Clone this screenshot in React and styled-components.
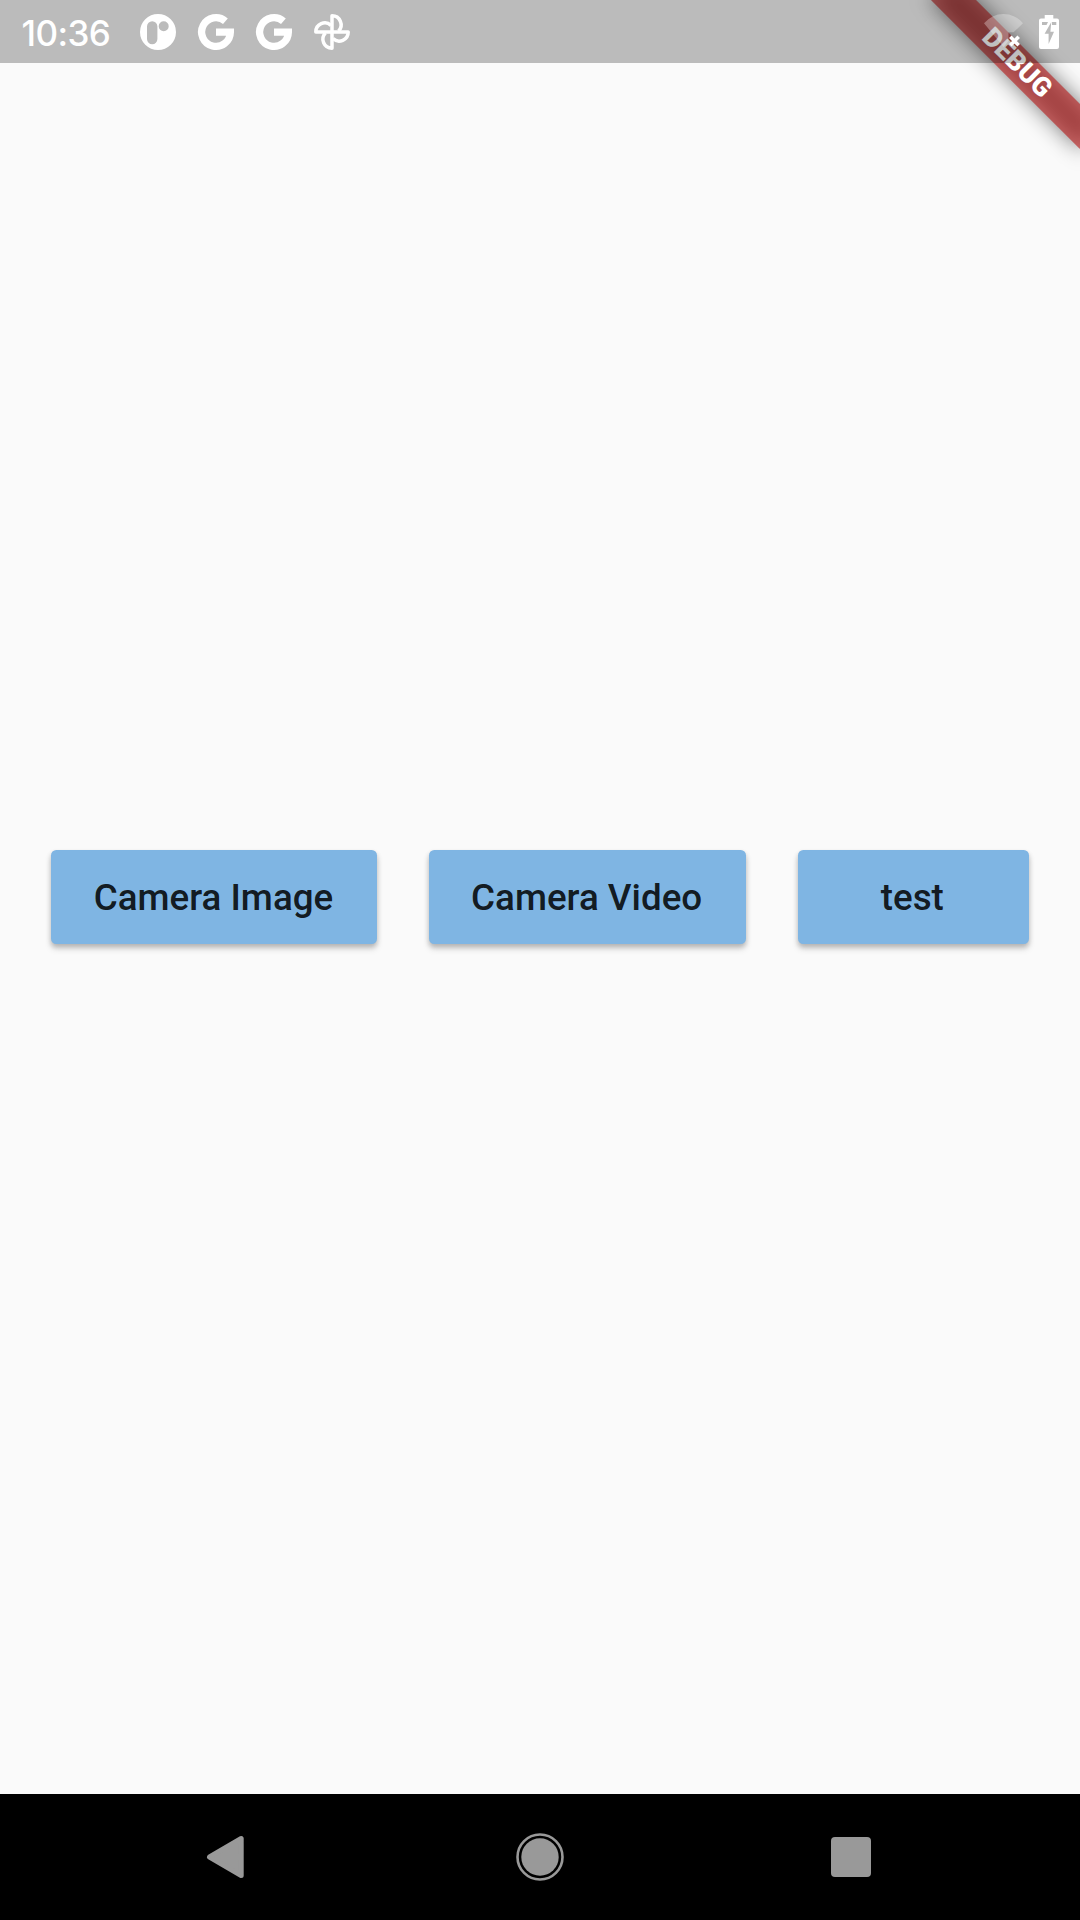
import React from "react";
import styled, { createGlobalStyle } from "styled-components";

const GlobalStyle = createGlobalStyle`
  * { box-sizing: border-box; }
  body { margin: 0; background: #fafafa; }
`;

const Screen = styled.div`
  position: relative;
  display: flex;
  flex-direction: column;
  width: 1080px;
  height: 1920px;
  overflow: hidden;
  background: #fafafa;
  font-family: Roboto, sans-serif;
`;

const StatusBar = styled.header`
  position: relative;
  z-index: 2;
  display: flex;
  justify-content: space-between;
  height: 63px;
  flex: none;
  padding: 0 21px 0 21.5px;
  background: rgba(0, 0, 0, 0.25);
`;

const StatusGroup = styled.div`
  display: flex;
  align-items: center;
  gap: ${(p) => p.$gap}px;
`;

const Clock = styled.time`
  width: 96.5px;
  padding-top: 2px;
  color: #fff;
  font: 500 35px/40px Inter, sans-serif;
  letter-spacing: -0.6px;
  white-space: nowrap;
`;

const Glyph = styled.svg`
  display: block;
  flex: none;
  width: ${(p) => p.$w}px;
  height: ${(p) => p.$h}px;
  overflow: visible;
`;

const Banner = styled.div`
  position: absolute;
  z-index: 1;
  top: 0;
  left: 975px;
  width: 210px;
  height: 31.5px;
  transform-origin: 105px 0;
  transform: rotate(45deg) translateY(73.5px);

  &::before {
    content: "";
    position: absolute;
    inset: 0;
    background: rgba(0, 0, 0, 0.5);
    filter: blur(10.4px);
  }
`;

const BannerLabel = styled.div`
  position: relative;
  height: 31.5px;
  background: rgba(183, 28, 28, 0.627);
  color: #fff;
  text-align: center;
  font-size: 26.775px;
  font-weight: 900;
  line-height: 31.5px;
`;

const Content = styled.main`
  flex: 1;
  display: flex;
  align-items: center;
  justify-content: space-evenly;
  padding-bottom: 63px;
`;

const RaisedButton = styled.button`
  min-width: 231px;
  height: 94.5px;
  padding: 0 44.2px 0 42.4px;
  border: 0;
  border-radius: 5.25px;
  background: #7fb5e3;
  color: rgba(0, 0, 0, 0.87);
  font: 500 36.75px/43px Roboto, sans-serif;
  white-space: nowrap;
  box-shadow: 0 3px 5px rgba(0, 0, 0, 0.2), 0 5px 7px rgba(0, 0, 0, 0.12);
`;

const NavBar = styled.nav`
  display: flex;
  align-items: center;
  justify-content: space-between;
  height: 126px;
  flex: none;
  padding: 0 209px 0 206px;
  background: #000;
`;

const NotificationDot = () => (
  <Glyph $w={36} $h={36} viewBox="0 0 36 36">
    <path
      fill="#fff"
      fillRule="evenodd"
      d="M18 0a18 18 0 1 1 0 36a18 18 0 1 1 0-36zM12.2 7.2a5.2 5.2 0 0 0-5.2 5.2v12.6a5.2 5.2 0 0 0 10.4 0V12.4a5.2 5.2 0 0 0-5.2-5.2zM23.7 7.2a5 5 0 1 0 0 10a5 5 0 1 0 0-10z"
    />
  </Glyph>
);

const GoogleMark = () => (
  <Glyph $w={36} $h={36} viewBox="0 0 36 36">
    <path
      fill="none"
      stroke="#fff"
      strokeWidth="7.3"
      d="M27.4 7.2A14.35 14.35 0 1 0 32.35 18.2H18"
    />
  </Glyph>
);

const Pinwheel = () => (
  <Glyph $w={36} $h={36} viewBox="-18 -18 36 36">
    {[0, 90, 180, 270].map((angle) => (
      <path
        key={angle}
        transform={`rotate(${angle})`}
        fill="none"
        stroke="#fff"
        strokeWidth="3.5"
        strokeLinejoin="round"
        d="M0 0V-16.2A9 9 0 0 1 6.6 -1"
      />
    ))}
  </Glyph>
);

const Wifi = () => (
  <Glyph $w={39} $h={35} viewBox="0 0 39 35">
    <path fill="#fff" fillOpacity="0.3" d="M0 9.3A25 25 0 0 1 39 9.3L29.5 18.3H24.5V27L19.5 33Z" />
    <path stroke="#fff" strokeWidth="3.6" d="M26.3 22.8l8.4 8.4M34.7 22.8l-8.4 8.4" />
  </Glyph>
);

const Battery = () => (
  <Glyph $w={20} $h={34} viewBox="0 0 20 34">
    <path fill="#fff" d="M5.7 0h8.600v3.5h3.700a2 2 0 0 1 2 2V32a2 2 0 0 1-2 2H2a2 2 0 0 1-2-2V5.5a2 2 0 0 1 2-2h3.700z" />
    <path fill="#bbb" d="M3 7h6l-1.5 3H3zM13 7h4.300v3H13zM12.300 7L5.600 18.800h4V29l5.400-12.300h-3.600z" />
  </Glyph>
);

export default function App() {
  return (
    <Screen>
      <GlobalStyle />
      <StatusBar>
        <StatusGroup $gap={22}>
          <Clock>10:36</Clock>
          <NotificationDot />
          <GoogleMark />
          <GoogleMark />
          <Pinwheel />
        </StatusGroup>
        <StatusGroup $gap={16}>
          <Wifi />
          <Battery />
        </StatusGroup>
      </StatusBar>
      <Content>
        <RaisedButton>Camera Image</RaisedButton>
        <RaisedButton>Camera Video</RaisedButton>
        <RaisedButton>test</RaisedButton>
      </Content>
      <NavBar>
        <Glyph $w={43} $h={44} viewBox="0 0 43 44">
          <path fill="#999" stroke="#999" strokeWidth="5" strokeLinejoin="round" d="M3.5 22L35.2 3.5V40.5Z" />
        </Glyph>
        <Glyph $w={48} $h={48} viewBox="0 0 48 48">
          <circle cx="24" cy="24" r="18.7" fill="#999" />
          <circle cx="24" cy="24" r="22.5" fill="none" stroke="#999" strokeWidth="2.6" />
        </Glyph>
        <Glyph $w={40} $h={40} viewBox="0 0 40 40">
          <rect width="40" height="40" rx="4" fill="#999" />
        </Glyph>
      </NavBar>
      <Banner>
        <BannerLabel>DEBUG</BannerLabel>
      </Banner>
    </Screen>
  );
}
